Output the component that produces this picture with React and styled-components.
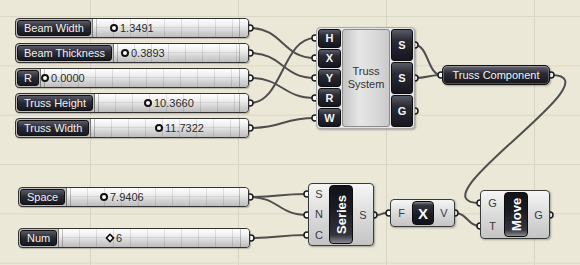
import React from 'react';
import styled, { createGlobalStyle } from 'styled-components';

const GlobalStyle = createGlobalStyle`
  html,
  body {
    margin: 0;
    padding: 0;
    background: #ebe8d7;
  }

  body {
    font-family: "Liberation Sans", Arial, sans-serif;
  }
`;

const Canvas = styled.div`
  position: relative;
  width: 580px;
  height: 265px;
  overflow: hidden;
  background-color: #ebe8d7;
  background-image:
    linear-gradient(90deg, #d7d4c2 1px, transparent 1px),
    linear-gradient(#dad7c5 1px, transparent 1px);
  background-size: 148px 100%, 100% 49.33px;
  background-position: 90px 0, 0 16px;
`;

const WireLayer = styled.svg`
  position: absolute;
  left: 0;
  top: 0;
  width: 580px;
  height: 265px;
`;

/* ---------- number sliders ---------- */

const SliderBox = styled.div`
  position: absolute;
  left: ${(p) => p.$x}px;
  top: ${(p) => p.$y}px;
  width: ${(p) => p.$w}px;
  height: 20px;
  box-sizing: border-box;
  display: flex;
  border: 1px solid #333;
  border-radius: 4px;
  background: #bdbdbd;
  box-shadow: 1px 1px 1px rgba(0, 0, 0, 0.22);
`;

const SliderLabel = styled.div`
  display: flex;
  align-items: center;
  padding: 0 6px;
  margin: 1px 0 1px 1px;
  border-radius: 3px;
  border: 1px solid #111;
  background: linear-gradient(#5b5b68, #2b2b36 45%, #181820);
  color: #f0f0f0;
  font-size: 11px;
  white-space: nowrap;
`;

const Track = styled.div`
  position: relative;
  flex: 1;
  margin-left: 1px;
  border-left: 1px solid #777;
  border-radius: 0 3px 3px 0;
  background: linear-gradient(#ffffff, #efefef 35%, #d3d3d3 70%, #bdbdbd);
`;

const Rail = styled.div`
  position: absolute;
  left: 3px;
  right: 8px;
  top: 0;
  bottom: 0;
  border-left: 1px solid rgba(0, 0, 0, 0.22);
  border-right: 1px solid rgba(0, 0, 0, 0.22);
  background-image:
    repeating-linear-gradient(90deg, transparent 0 16px, rgba(0, 0, 0, 0.1) 16px 17px),
    linear-gradient(transparent 8px, rgba(0, 0, 0, 0.07) 8px 9px, transparent 9px);
`;

const Value = styled.div`
  position: absolute;
  top: 0;
  bottom: 0;
  display: flex;
  align-items: center;
  gap: 2px;
  font-size: 11px;
  color: #2c2c2c;
  white-space: nowrap;
`;

const Knob = styled.span`
  width: 4px;
  height: 4px;
  border: 2px solid #111;
  background: #fff;
  border-radius: ${(p) => (p.$diamond ? '1px' : '50%')};
  transform: ${(p) => (p.$diamond ? 'rotate(45deg) scale(0.85)' : 'none')};
`;

/* ---------- components ---------- */

const Node = styled.div`
  position: absolute;
  left: ${(p) => p.$x}px;
  top: ${(p) => p.$y}px;
  width: ${(p) => p.$w}px;
  height: ${(p) => p.$h}px;
  box-sizing: border-box;
  display: flex;
  border: 1px solid #3a3a3a;
  border-radius: 4px;
  background: linear-gradient(#f6f6f6, #dedede 45%, #c4c4c4);
  box-shadow: 1px 1px 2px rgba(0, 0, 0, 0.3);
  font-size: 11px;
  color: #3a3a3a;
`;

const PortColumn = styled.div`
  width: ${(p) => p.$w}px;
  display: flex;
  flex-direction: column;
  justify-content: space-around;
  align-items: center;
`;

const Nick = styled.div`
  width: ${(p) => p.$w}px;
  margin: 1px 0;
  box-sizing: border-box;
  display: flex;
  align-items: center;
  justify-content: center;
  border: 1px solid #0c0c0c;
  border-radius: 4px;
  background: linear-gradient(#8a8a92, #34343e 14%, #1a1a22 60%, #121218);
  color: #fafafa;
  font-weight: bold;
  font-size: ${(p) => p.$size || 13}px;
  writing-mode: ${(p) => (p.$vertical ? 'vertical-rl' : 'horizontal-tb')};
  transform: ${(p) => (p.$vertical ? 'rotate(180deg)' : 'none')};
`;

const Cluster = styled.div`
  position: absolute;
  left: 316px;
  top: 27px;
  width: 99px;
  height: 102px;
  box-sizing: border-box;
  display: flex;
  gap: 1px;
  padding: 1px;
  border: 1px solid #aaa;
  border-radius: 4px;
  background: #e6e6e6;
  box-shadow: 1px 1px 2px rgba(0, 0, 0, 0.3);
`;

const TabColumn = styled.div`
  width: ${(p) => p.$w}px;
  display: flex;
  flex-direction: column;
  gap: 1px;
`;

const Tab = styled.div`
  flex: 1;
  display: flex;
  align-items: center;
  justify-content: center;
  border: 1px solid #0e0e0e;
  border-radius: 3px;
  background: linear-gradient(#5a5a66, #2a2a35 35%, #16161e);
  color: #f4f4f4;
  font-size: 11px;
  font-weight: bold;
`;

const ClusterBody = styled.div`
  flex: 1;
  display: flex;
  align-items: center;
  justify-content: center;
  text-align: center;
  border: 1px solid #8a8a8a;
  border-radius: 3px;
  background: linear-gradient(90deg, #c4c4c4, #e6e6e6 35%, #dadada 70%, #c9c9c9);
  color: #333;
  font-size: 11px;
  line-height: 13px;
`;

const Param = styled.div`
  position: absolute;
  left: 442px;
  top: 65px;
  width: 108px;
  height: 20px;
  box-sizing: border-box;
  display: flex;
  align-items: center;
  justify-content: center;
  border: 1px solid #111;
  border-radius: 5px;
  background: linear-gradient(#6a6a76, #2c2c37 40%, #15151c);
  box-shadow: inset 0 0 0 1px rgba(255, 255, 255, 0.25), 1px 1px 2px rgba(0, 0, 0, 0.3);
  color: #f2f2f2;
  font-size: 11px;
`;

const sliders = [
  { label: 'Beam Width', value: '1.3491', x: 15, y: 18, w: 234, knob: 114 },
  { label: 'Beam Thickness', value: '0.3893', x: 15, y: 43, w: 234, knob: 125 },
  { label: 'R', value: '0.0000', x: 15, y: 68, w: 234, knob: 45 },
  { label: 'Truss Height', value: '10.3660', x: 15, y: 93, w: 234, knob: 148 },
  { label: 'Truss Width', value: '11.7322', x: 15, y: 118, w: 234, knob: 159 },
  { label: 'Space', value: '7.9406', x: 18, y: 187, w: 231, knob: 104 },
  { label: 'Num', value: '6', x: 18, y: 228, w: 232, knob: 110, diamond: true },
];

const wires = [
  [250, 28, 315, 58],
  [250, 53, 315, 78],
  [250, 78, 315, 98],
  [250, 103, 315, 38],
  [250, 128, 315, 118],
  [415, 45, 441, 75],
  [415, 78, 441, 75],
  [250, 197, 307, 194],
  [250, 197, 307, 215],
  [251, 238, 307, 235],
  [374, 215, 389, 213],
  [455, 213, 480, 226],
];

const grips = [
  ...sliders.map((s) => [s.x + s.w + 1, s.y + 10]),
  [315, 38], [315, 58], [315, 78], [315, 98], [315, 118],
  [415, 45], [415, 78], [415, 111],
  [441, 75], [551, 75],
  [307, 194], [307, 215], [307, 235], [374, 215],
  [389, 213], [455, 213],
  [480, 203], [480, 226], [550, 215],
];

const curve = ([x1, y1, x2, y2]) => {
  const d = Math.max(Math.abs(x2 - x1) / 2, 12);
  return `M${x1} ${y1} C${x1 + d} ${y1}, ${x2 - d} ${y2}, ${x2} ${y2}`;
};

const Slider = ({ label, value, x, y, w, knob, diamond }) => (
  <SliderBox $x={x} $y={y} $w={w}>
    <SliderLabel>{label}</SliderLabel>
    <Track>
      <Rail />
    </Track>
    <Value style={{ left: knob - x - 5 }}>
      <Knob $diamond={diamond} />
      {value}
    </Value>
  </SliderBox>
);

const App = () => (
  <Canvas>
    <GlobalStyle />
    <WireLayer viewBox="0 0 580 265">
      <g fill="none" stroke="#4e4e4e" strokeWidth="2">
        {wires.map((wire, i) => (
          <path key={i} d={curve(wire)} />
        ))}
        <path d="M551 75 C621 75, 409 203, 480 203" />
      </g>
      <g fill="#fff" stroke="#1c1c1c" strokeWidth="1.5">
        {grips.map(([cx, cy], i) => (
          <circle key={i} cx={cx} cy={cy} r="3" />
        ))}
      </g>
    </WireLayer>

    {sliders.map((s) => (
      <Slider key={s.label} {...s} />
    ))}

    <Cluster>
      <TabColumn $w={23}>
        {['H', 'X', 'Y', 'R', 'W'].map((t) => (
          <Tab key={t}>{t}</Tab>
        ))}
      </TabColumn>
      <ClusterBody>
        Truss
        <br />
        System
      </ClusterBody>
      <TabColumn $w={22}>
        {['S', 'S', 'G'].map((t, i) => (
          <Tab key={i}>{t}</Tab>
        ))}
      </TabColumn>
    </Cluster>

    <Param>Truss Component</Param>

    <Node $x={308} $y={183} $w={66} $h={63}>
      <PortColumn $w={20}>
        <span>S</span>
        <span>N</span>
        <span>C</span>
      </PortColumn>
      <Nick $w={24} $vertical>Series</Nick>
      <PortColumn $w={20}>
        <span>S</span>
      </PortColumn>
    </Node>

    <Node $x={390} $y={199} $w={65} $h={28}>
      <PortColumn $w={21}>
        <span>F</span>
      </PortColumn>
      <Nick $w={22} $size={15}>X</Nick>
      <PortColumn $w={20}>
        <span>V</span>
      </PortColumn>
    </Node>

    <Node $x={480} $y={190} $w={70} $h={49}>
      <PortColumn $w={23}>
        <span>G</span>
        <span>T</span>
      </PortColumn>
      <Nick $w={24} $vertical>Move</Nick>
      <PortColumn $w={21}>
        <span>G</span>
      </PortColumn>
    </Node>
  </Canvas>
);

export default App;
